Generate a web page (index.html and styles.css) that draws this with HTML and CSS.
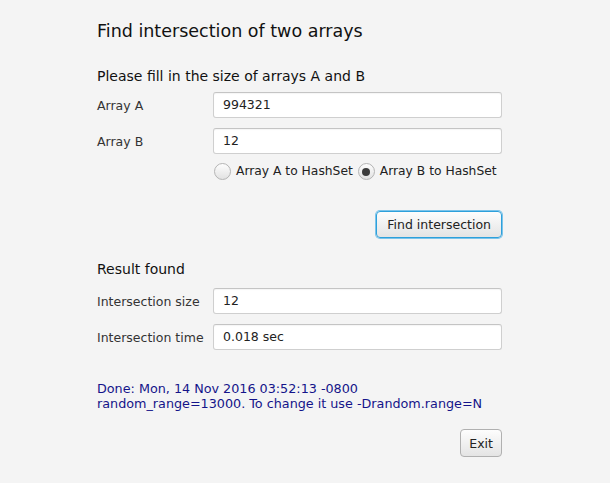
FILE: index.html
```html
<!DOCTYPE html>
<html>
<head>
<meta charset="utf-8">
<link rel="stylesheet" href="styles.css">
</head>
<body>
<div class="app">
  <h1 class="title">Find intersection of two arrays</h1>
  <h2 class="subtitle">Please fill in the size of arrays A and B</h2>
  <div class="grid grid-input">
    <label class="label">Array A</label>
    <div class="field">994321</div>
    <label class="label">Array B</label>
    <div class="field">12</div>
    <div></div>
    <div class="radios">
      <span class="radio"><span class="dot"></span>Array A to HashSet</span>
      <span class="radio checked"><span class="dot"></span>Array B to HashSet</span>
    </div>
  </div>
  <div class="actions actions-find">
    <button class="btn btn-focus">Find intersection</button>
  </div>
  <h2 class="subtitle result-title">Result found</h2>
  <div class="grid grid-result">
    <label class="label">Intersection size</label>
    <div class="field">12</div>
    <label class="label">Intersection time</label>
    <div class="field">0.018 sec</div>
  </div>
  <div class="message">
    <div>Done: Mon, 14 Nov 2016 03:52:13 -0800</div>
    <div>random_range=13000. To change it use -Drandom.range=N</div>
  </div>
  <div class="actions actions-exit">
    <button class="btn">Exit</button>
  </div>
</div>
</body>
</html>
```

FILE: styles.css
```css
html, body {
  margin: 0;
  padding: 0;
  background: #f4f4f4;
}
body {
  font-family: "DejaVu Sans", "Liberation Sans", sans-serif;
  font-size: 12.5px;
  color: #2a2a2a;
}
.app {
  width: 405px;
  margin-left: 97px;
  padding-top: 20px;
}
.title {
  margin: 0;
  font-size: 17.5px;
  line-height: 22px;
  font-weight: normal;
  color: #111;
}
.subtitle {
  margin: 25px 0 0 0;
  font-size: 14px;
  line-height: 18px;
  font-weight: normal;
  color: #111;
}
.grid {
  display: grid;
  grid-template-columns: 116px 289px;
  row-gap: 10px;
  align-items: center;
}
.grid-input {
  margin-top: 7px;
}
.grid-input .radios {
  margin-top: -1px;
}
.label {
  line-height: 15px;
  color: #333;
  white-space: nowrap;
}
.field {
  height: 24px;
  line-height: 24px;
  background: #fff;
  border: 1px solid #cfcfcf;
  border-top-color: #c4c4c4;
  border-radius: 3px;
  padding-left: 9px;
  color: #222;
  box-shadow: inset 0 1px 1px rgba(0,0,0,0.04);
}
.radios {
  display: flex;
  gap: 5px;
  height: 17px;
  align-items: center;
  padding-left: 1px;
  white-space: nowrap;
}
.radio {
  display: flex;
  flex: none;
  align-items: center;
  gap: 5px;
  font-size: 12.3px;
  line-height: 17px;
  color: #222;
  white-space: nowrap;
}
.dot {
  box-sizing: border-box;
  flex: none;
  width: 17px;
  height: 17px;
  border-radius: 50%;
  border: 1px solid #b4b4b4;
  background: linear-gradient(#fdfdfd, #e2e2e2);
  display: flex;
  align-items: center;
  justify-content: center;
}
.checked .dot::after {
  content: "";
  width: 8px;
  height: 8px;
  border-radius: 50%;
  background: #3c3c3c;
}
.actions {
  display: flex;
  justify-content: flex-end;
}
.actions-find {
  margin-top: 31px;
}
.btn {
  font-family: inherit;
  font-size: 12.5px;
  color: #222;
  background: linear-gradient(#fdfdfd, #e4e4e4);
  border: 1px solid #b0b0b0;
  border-radius: 4px;
  height: 28px;
  padding: 0 8px;
  margin: 0;
}
.btn-focus {
  height: 27px;
  border: 1px solid #2ea0db;
  box-shadow: 0 0 0 1px #7cc4ea;
  padding: 0 10px;
}
.result-title {
  margin-top: 22px;
}
.grid-result {
  margin-top: 10px;
}
.message {
  margin-top: 31px;
  font-size: 12.75px;
  line-height: 15px;
  color: #14148a;
}
.actions-exit {
  margin-top: 18px;
}
```
